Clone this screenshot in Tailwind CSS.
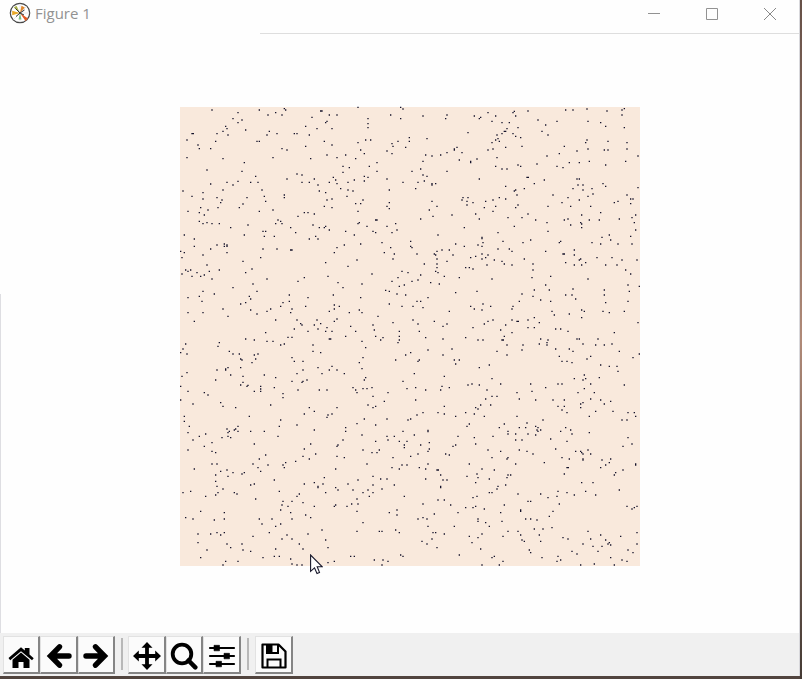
<!DOCTYPE html>
<html lang="en">
<head>
<meta charset="utf-8">
<meta name="viewport" content="width=device-width, initial-scale=1">
<title>Figure 1</title>
<script src="https://cdn.jsdelivr.net/npm/@tailwindcss/browser@4"></script>
</head>
<body class="min-h-screen bg-gradient-to-b from-[#665047] via-[#b08a78] to-[#443a34] pr-[2px] pb-[3px] flex flex-col">
<main class="flex-1 flex flex-col bg-[#fefefe] border-r border-[#d8d8dc] shadow-[0_3px_0_#51443e]">
  <header class="h-[34px] flex items-start justify-between">
    <div class="h-[33px] w-[260px] flex items-start pl-[9px] pt-[2px] gap-1">
      <svg class="w-[22px] h-[22px]" viewBox="0 0 22 22" aria-hidden="true">
        <circle cx="11" cy="11" r="9.7" fill="#fff" stroke="#444" stroke-width="1.2"/>
        <path d="M11 1.5V20.500M1.500 11H20.500M4.300 4.300 17.700 17.700M4.300 17.700 17.700 4.300" stroke="#ccc" stroke-width=".5"/>
        <path d="M11 11 7.500 3.800 4.800 5.600Z" fill="#a9b14c"/>
        <path d="M11 11 3.200 8.800 3.200 13.200Z" fill="#e9a928"/>
        <path d="M11 11 12.500 3.800 15.800 5.500Z" fill="#e0862c"/>
        <path d="M11 11 19 16.500 16.500 19Z" fill="#e35a23"/>
        <path d="M11 11 9.500 17.500 12.500 17.500Z" fill="#79bd83"/>
        <path d="M6.500 6.500 11 11 15.500 8M11 11 7 14.500M11 11 15 13" fill="none" stroke="#333" stroke-width="1"/>
      </svg>
      <h1 class="font-['Open_Sans',sans-serif] text-[15px] leading-[22px] text-[#929292]">Figure 1</h1>
    </div>
    <div class="flex-1 h-full border-b border-[#dedede] flex justify-end">
      <button aria-label="Minimize" class="w-[58px] h-[28px] flex items-center justify-center"><svg class="size-3" viewBox="0 0 12 12"><path d="M0 5.500H12" stroke="#929292"/></svg></button>
      <button aria-label="Maximize" class="w-[58px] h-[28px] flex items-center justify-center"><svg class="size-3" viewBox="0 0 12 12"><path d="M.5.5h11v11H.5z" fill="none" stroke="#929292"/></svg></button>
      <button aria-label="Close" class="w-[58px] h-[28px] flex items-center justify-center"><svg class="size-3" viewBox="0 0 12 12"><path d="M0 0 12 12M12 0 0 12" stroke="#888"/></svg></button>
    </div>
  </header>
  <section class="flex-1 flex items-center justify-center pl-[20px] pt-[6px] relative" aria-label="Plot">
    <span class="absolute left-0 top-[260px] bottom-0 w-px bg-[#dedee2]"></span>
    <svg class="w-[460px] h-[459px] bg-[#f9e9dc] overflow-visible" viewBox="15 21 1380 1377" role="img" aria-label="Scattered points">
      <path id="points" fill="#14122a"/>
    </svg>
    <svg class="absolute left-[310px] bottom-[58px] w-[13px] h-[21px]" viewBox="0 0 13 21" aria-hidden="true"><path d="M.6 1V17.300L4.500 13.800 7 19.500 9.500 18.400 7.200 12.800H12.300Z" fill="#fff" stroke="#17172a" stroke-width="1.1"/></svg>
  </section>
  <footer class="h-[43px] bg-[#f0f0f0] flex items-start pt-[3px] pl-[3px]" role="toolbar">
    <button aria-label="Home" class="w-[37px] h-[38px] pt-[2px] bg-[#fbfbfb] border-t border-l border-t-[#e2e2e2] border-l-[#e2e2e2] border-r-2 border-b-2 border-r-[#858585] border-b-[#858585] flex items-center justify-center"><svg class="w-[28px] h-[28px]" viewBox="0 0 28 28"><path d="M1.500 16 14 5.300 17.800 8.500V6H22.500V12.500L26.700 16.200 25 18.300 14 9.300 3.200 18.300Z"/><path d="M5.500 17.700 14 10.600 22.500 17.700V26H16.500V20H11.500V26H5.500Z"/></svg></button>
    <button aria-label="Back" class="w-[38px] h-[38px] pt-[2px] bg-[#fbfbfb] border-t border-l border-t-[#e2e2e2] border-l-[#e2e2e2] border-r-2 border-b-2 border-r-[#858585] border-b-[#858585] flex items-center justify-center"><svg class="w-[28px] h-[28px]" viewBox="0 0 28 28"><path d="M14.500 4.800 5.500 14 14.500 23.200M6 14H24" fill="none" stroke="#000" stroke-width="5.400" stroke-linecap="round" stroke-linejoin="miter"/></svg></button>
    <button aria-label="Forward" class="w-[37px] h-[38px] pt-[2px] bg-[#fbfbfb] border-t border-l border-t-[#e2e2e2] border-l-[#e2e2e2] border-r-2 border-b-2 border-r-[#858585] border-b-[#858585] flex items-center justify-center"><svg class="w-[28px] h-[28px]" viewBox="0 0 28 28"><path d="M13.500 4.800 22.500 14 13.500 23.200M22 14H4" fill="none" stroke="#000" stroke-width="5.400" stroke-linecap="round" stroke-linejoin="miter"/></svg></button>
    <span class="w-[2px] h-[32px] bg-[#b8b8b8] ml-[6px] mr-[5px] mt-[2px]"></span>
    <button aria-label="Pan" class="w-[38px] h-[38px] pt-[2px] bg-[#fbfbfb] border-t border-l border-t-[#e2e2e2] border-l-[#e2e2e2] border-r-2 border-b-2 border-r-[#858585] border-b-[#858585] flex items-center justify-center"><svg class="w-[28px] h-[28px]" viewBox="0 0 28 28"><path d="M14 0 19.500 5.800H15.900V12.100H22.200V8.500L28 14 22.200 19.500V15.900H15.900V22.200H19.500L14 28 8.500 22.200H12.100V15.900H5.800V19.500L0 14 5.800 8.500V12.100H12.100V5.800H8.500Z"/></svg></button>
    <button aria-label="Zoom" class="w-[37px] h-[38px] pt-[2px] bg-[#fbfbfb] border-t border-l border-t-[#e2e2e2] border-l-[#e2e2e2] border-r-2 border-b-2 border-r-[#858585] border-b-[#858585] flex items-center justify-center"><svg class="w-[28px] h-[28px]" viewBox="0 0 28 28"><circle cx="12" cy="12" r="9.300" fill="none" stroke="#000" stroke-width="3.800"/><path d="M18.500 18.500 25.300 25.300" stroke="#000" stroke-width="4.500" stroke-linecap="round"/></svg></button>
    <button aria-label="Configure subplots" class="w-[38px] h-[38px] pt-[2px] bg-[#fbfbfb] border-t border-l border-t-[#e2e2e2] border-l-[#e2e2e2] border-r-2 border-b-2 border-r-[#858585] border-b-[#858585] flex items-center justify-center"><svg class="w-[28px] h-[28px]" viewBox="0 0 28 28"><path d="M2 6H26M2 14H26M2 22H26" stroke="#000" stroke-width="2.200" stroke-linecap="round"/><path d="M6 3.300h5.500v5.500H6zM16 11.300h5.500v5.500H16zM8 19.300h5.500v5.500H8z" stroke="#000" stroke-width=".6" stroke-linejoin="round"/></svg></button>
    <span class="w-[2px] h-[32px] bg-[#b8b8b8] ml-[6px] mr-[6px] mt-[2px]"></span>
    <button aria-label="Save" class="w-[38px] h-[38px] pt-[2px] bg-[#fbfbfb] border-t border-l border-t-[#e2e2e2] border-l-[#e2e2e2] border-r-2 border-b-2 border-r-[#858585] border-b-[#858585] flex items-center justify-center"><svg class="w-[28px] h-[28px]" viewBox="0 0 28 28"><path d="M2.500 2.500H18.500L25.500 9.500V25.500H2.500Z" fill="none" stroke="#000" stroke-width="2.200" stroke-linejoin="round"/><path d="M7 2.500V11H18V2.500" fill="none" stroke="#000" stroke-width="2"/><path d="M7 2.500H12.500V11H7Z"/><path d="M7.500 25V17.500H20.500V25" fill="none" stroke="#000" stroke-width="2"/></svg></button>
  </footer>
</main>
<script>
// Point positions, one list for each quadrant of the plot: x offset, y offset, "x,y ..."
const quadrants = [
[0,0,`111,30 253,30 328,26 332,30 549,22 677,22 684,27 189,38 302,38 437,33 441,33 279,45 321,45 463,45 486,45 647,45 174,56 201,60 411,52 579,56 677,56 189,68 452,68 456,64 579,71 579,83 152,79 156,86 392,79 144,94 212,90 283,94 426,86 471,86 51,101 55,101 126,101 159,105 276,105 306,101 358,101 366,101 403,105 36,120 122,124 246,124 253,124 448,124 549,128 572,120 587,120 669,124 703,113 703,124 69,135 73,146 107,146 392,139 471,135 321,146 336,150 557,150 651,131 654,139 692,142 636,153 651,161 568,161 36,173 144,176 294,173 407,176 456,165 486,173 512,165 542,176 208,188 606,188 504,199 523,203 583,199 96,210 201,214 504,217 606,214 366,222 381,225 242,229 336,237 418,237 475,232 482,240 538,240 568,229 579,232 568,243 636,237 107,252 156,247 174,255 189,244 227,247 249,247 381,247 403,247 429,255 463,247 486,251 519,247 684,247 24,273 84,278 144,270 261,270 433,273 452,278 497,266 519,270 534,273 643,270 51,289 84,297 126,293 216,293 268,289 328,285 328,293 272,304 456,300 471,297 516,289 564,300 141,300 137,308 204,312 448,319 542,311 557,311 643,308 636,319 643,326 77,323 129,323 193,323 471,323 39,334 73,338 99,330 253,334 294,330 549,334 88,345 388,338 399,338 418,342 369,349 602,360 606,360 73,364 84,371 96,368 111,371 133,371 219,375 309,360 317,364 302,371 321,371 414,375 549,371 553,368 576,379 636,379 662,371 167,383 347,383 433,383 448,383 452,379 264,394 272,394 362,398 463,390 512,394 594,394 602,398 651,398 666,390 28,405 208,405 268,409 298,409 422,409 538,405 58,417 403,417 429,417 621,428 58,439 126,435 148,432 148,439 156,435 156,439 508,435 557,432 107,447 264,447 306,447 347,450 351,450 486,443 647,443 17,454 28,458 156,458 478,458 628,458 658,462 84,465 21,473 257,473 654,477 204,484 452,488 546,480 96,495 519,499 231,507 32,510 39,514 47,510 66,518 21,522 103,514 133,510 88,525 51,529 77,529 212,518 591,522 681,514 699,518 111,537 276,537 388,533 459,529 669,533 174,563 234,552 369,544 489,548 504,563 561,552 651,544 688,555 673,559 84,574 118,582 246,574 632,571 643,574 666,582 692,585 39,593 73,589 223,589 227,597 343,585 399,593 475,585 557,593 81,604 212,608 197,612 324,608 343,604 643,612 317,619 392,619 478,615 493,619 681,619 144,627 227,630 287,627 276,634 351,627 478,627 553,630 39,638 84,638 246,642 347,638 463,634 523,638 561,638 159,649 609,649 58,664 302,660 366,660 426,660 478,664 486,657 654,668 377,671 381,675 418,675 437,671 527,679 594,675 358,687 429,687 456,683 598,690 272,698 399,694 452,694 471,694 542,694 673,694`],
[690,0,`482,30 504,30 546,27 606,33 651,30 658,26 249,38 324,38 328,34 369,33 54,48 126,45 122,56 208,48 223,56 227,52 272,48 332,48 651,45 399,60 261,64 291,68 313,68 456,64 549,64 587,68 422,75 602,79 339,83 658,83 306,86 298,94 302,94 189,98 411,94 276,105 291,101 324,101 332,109 347,113 429,105 13,113 66,116 13,124 272,120 279,116 283,124 261,128 546,120 542,128 609,124 666,128 2,142 156,142 148,147 148,150 302,142 351,139 478,139 249,150 264,147 549,147 598,150 609,150 666,147 126,158 171,158 516,153 463,161 62,165 81,168 107,165 426,168 699,168 276,173 54,184 163,180 216,177 197,184 197,188 493,188 523,188 553,184 662,184 396,192 272,199 339,195 347,199 456,199 474,203 602,195 47,207 21,214 126,214 291,207 306,207 54,225 66,229 58,243 39,247 223,237 366,232 370,232 418,240 516,237 523,237 81,251 81,255 92,251 388,251 519,255 534,255 594,251 602,259 32,266 302,259 328,273 332,270 358,266 504,266 534,270 561,266 699,263 336,285 444,285 564,282 549,289 666,285 174,293 189,293 171,300 186,304 186,315 204,308 81,304 96,319 242,304 264,300 283,293 302,297 238,323 272,319 332,323 339,315 489,293 523,300 471,308 497,319 429,319 557,319 628,308 639,304 677,297 684,297 677,311 73,330 264,334 587,338 84,349 141,345 212,342 223,357 309,353 351,353 369,342 530,345 692,345 47,357 392,360 478,360 489,357 553,360 583,360 643,357 681,353 178,383 328,379 426,368 497,375 527,368 530,372 530,383 688,368 279,398 429,394 692,390 99,405 613,405 677,409 17,424 231,412 231,416 234,428 294,424 354,428 377,420 463,428 467,424 591,412 617,420 561,428 587,432 639,432 681,432 17,439 21,443 152,432 178,439 219,435 231,439 36,462 96,454 111,450 133,450 144,465 88,462 92,465 279,447 313,447 321,454 422,454 508,450 231,462 249,465 212,469 197,473 231,477 242,473 474,462 478,462 508,465 576,473 621,473 96,477 126,484 268,480 291,484 358,477 482,488 523,480 527,477 542,488 651,480 696,480 58,492 96,492 96,503 246,495 298,492 321,495 384,492 508,495 530,495 602,495 636,495 182,503 193,503 204,507 384,510 662,510 9,518 92,514 99,518 677,522 47,525 118,529 437,529 163,533 381,533 21,544 39,540 77,548 103,552 261,537 549,537 422,555 669,555 703,559 388,570 433,570 504,567 598,570 673,574 152,578 216,574 351,582 384,589 482,585 501,585 598,585 2,585 69,593 512,597 36,604 47,604 343,604 407,600 437,604 602,608 669,604 24,619 54,623 197,619 208,627 234,612 231,630 257,619 324,619 321,627 133,634 441,634 530,630 538,634 594,634 613,638 658,634 448,645 493,642 388,653 530,653 24,660 39,672 88,664 249,664 264,660 238,672 321,660 336,664 340,664 369,660 403,668 699,668 114,679 126,672 302,675 204,683 287,690 369,683 388,683 452,687 467,687 43,694 321,698 489,694 628,698`],
[0,705,`212,12 238,15 276,19 294,19 339,7 351,7 463,12 467,12 512,4 602,4 617,15 624,8 673,4 673,15 669,23 32,27 133,23 129,34 317,30 328,27 414,30 561,19 24,42 17,53 36,57 163,49 174,57 193,57 414,49 437,53 572,38 238,60 249,57 242,72 197,72 201,75 231,83 351,68 358,79 384,79 564,68 553,83 662,75 692,60 126,105 152,102 152,105 159,98 197,98 384,105 429,98 471,94 463,105 486,105 561,101 36,113 21,124 167,120 204,124 268,120 302,128 366,116 441,116 508,116 572,128 122,135 568,135 351,139 381,142 384,139 396,135 684,139 204,142 197,150 216,154 219,151 17,154 257,154 257,162 257,169 298,158 369,165 433,165 456,165 534,158 542,165 546,173 564,161 576,161 591,158 696,161 39,169 88,173 99,180 238,169 324,176 324,188 594,184 639,173 17,195 54,207 137,203 144,214 182,218 287,210 403,218 486,218 579,210 594,218 602,214 628,199 223,244 388,237 418,229 459,240 471,237 456,247 28,244 28,259 317,255 568,252 636,252 699,255 43,274 39,293 156,282 163,289 159,293 178,285 182,282 189,274 189,289 227,289 268,289 313,274 366,270 418,285 512,278 512,289 546,266 602,270 684,289 54,315 73,304 92,297 141,308 159,304 167,308 309,304 504,315 561,300 636,304 639,315 658,304 602,319 673,319 696,319 39,345 88,334 111,323 111,349 122,353 238,327 388,342 407,327 486,334 489,330 564,345 591,353 606,353 613,345 688,330 688,338 253,372 272,360 384,364 403,372 422,357 486,364 508,368 654,368 111,387 126,387 234,387 249,398 279,390 324,390 332,383 328,398 362,379 576,387 681,390 696,390 673,402 651,398 58,402 137,409 156,405 174,413 159,424 201,417 208,413 257,409 482,402 122,420 122,439 298,435 448,428 549,435 594,424 617,432 636,432 126,454 144,462 227,450 238,447 388,447 418,443 444,447 429,454 429,458 482,458 519,447 594,450 621,462 658,450 24,473 47,469 129,473 122,480 92,484 178,473 186,477 313,469 373,477 366,484 452,473 489,465 534,465 564,473 579,465 594,473 583,484 688,484 242,492 324,499 351,499 546,492 321,510 339,514 384,503 418,514 478,514 482,510 530,507 549,507 516,514 77,529 148,533 317,525 347,533 546,529 643,533 666,525 32,548 54,552 148,552 118,555 253,552 291,552 351,552 392,540 407,548 666,540 261,567 302,574 317,567 564,563 69,597 107,597 126,593 137,600 148,593 283,593 336,600 399,597 441,585 546,589 613,589 621,589 662,585 673,593 69,623 234,604 321,612 351,612 452,615 156,627 167,638 201,627 204,645 373,627 384,642 96,645 227,649 302,642 459,638 77,668 264,668 298,664 313,664 347,672 527,664 538,664 677,660 684,664 152,679 189,679 144,690 351,687 366,690 381,690 459,683 478,679 598,675 624,675 621,690 639,679`],
[690,705,`62,8 114,12 182,8 219,15 234,15 291,15 295,15 298,4 407,12 429,15 516,12 523,12 579,12 306,30 354,30 403,27 426,23 426,30 534,27 572,30 598,30 621,27 69,45 141,42 276,49 351,45 452,42 493,42 504,49 643,49 17,53 2,60 114,60 306,60 463,64 557,64 546,72 684,68 703,57 39,79 43,75 148,75 163,75 152,87 471,79 486,79 501,83 223,98 253,90 587,90 613,94 636,94 639,109 28,116 118,124 261,131 508,131 538,120 542,131 534,135 583,128 189,150 201,147 223,150 287,147 377,147 459,147 471,147 557,147 658,150 6,161 32,158 62,165 111,154 107,165 133,158 246,165 422,158 538,161 381,169 336,173 519,173 568,173 261,184 276,184 242,192 343,192 392,195 444,195 478,195 557,192 587,195 32,195 534,203 527,207 598,207 617,199 118,214 212,218 219,222 227,210 257,210 459,214 478,214 527,218 471,225 54,233 99,233 118,237 182,233 208,237 486,233 572,229 624,229 669,233 688,233 692,244 36,240 152,244 238,244 336,244 553,244 17,252 9,255 414,255 651,255 666,255 186,274 193,267 283,278 298,267 343,278 362,278 366,264 392,274 399,278 396,285 399,289 407,285 482,278 467,289 497,285 501,297 553,293 69,286 69,290 28,300 159,304 264,304 309,289 309,297 332,297 369,297 392,300 669,308 6,319 73,323 47,330 152,330 144,334 208,308 212,327 332,315 351,315 437,312 486,319 681,327 654,334 73,342 69,349 39,357 122,357 133,360 249,345 287,349 343,345 366,349 384,357 452,342 512,349 527,349 530,353 534,357 549,345 557,357 17,364 261,368 306,372 309,368 471,368 493,372 534,372 534,375 591,375 617,372 613,383 602,390 418,383 6,390 69,387 193,387 332,387 692,387 692,390 43,398 62,402 96,405 100,405 231,402 268,405 486,398 490,398 587,398 654,405 632,413 628,420 478,417 107,420 62,432 114,435 126,435 186,424 216,417 219,428 212,443 253,432 309,420 317,420 306,428 530,443 564,443 107,454 107,458 302,450 279,454 276,462 643,465 253,473 261,473 339,477 407,477 459,469 486,473 508,480 542,469 572,480 456,484 429,488 204,488 216,484 99,495 118,495 369,499 377,499 54,507 137,510 182,518 204,518 212,514 238,522 298,510 463,507 666,514 681,522 688,518 696,514 88,537 159,533 287,533 347,525 347,529 444,529 433,544 39,552 54,548 66,552 219,552 219,559 242,563 291,559 362,552 377,552 396,555 69,574 148,574 253,574 388,582 414,582 441,578 309,589 339,589 549,589 84,593 92,593 118,597 231,597 696,593 81,612 193,604 219,608 294,604 347,600 403,600 587,600 647,604 474,608 489,612 557,612 602,615 351,615 358,619 407,619 51,619 66,627 201,623 534,627 609,627 613,623 617,630 564,634 591,634 696,627 96,638 227,642 373,645 377,653 501,649 516,657 579,649 669,645 684,653 163,660 261,668 268,664 411,668 459,664 467,675 456,679 617,668 651,675 666,679 294,679 231,690 283,690 527,690 568,687 628,690`]
];
document.getElementById("points").setAttribute("d", quadrants.map(([ox, oy, list]) =>
  list.trim().split(/\s+/).map(pair => {
    const [x, y] = pair.split(",").map(Number);
    return `M${x + ox - 2} ${y + oy - 2}h4v4h-4z`;
  }).join("")).join(""));
</script>
</body>
</html>
